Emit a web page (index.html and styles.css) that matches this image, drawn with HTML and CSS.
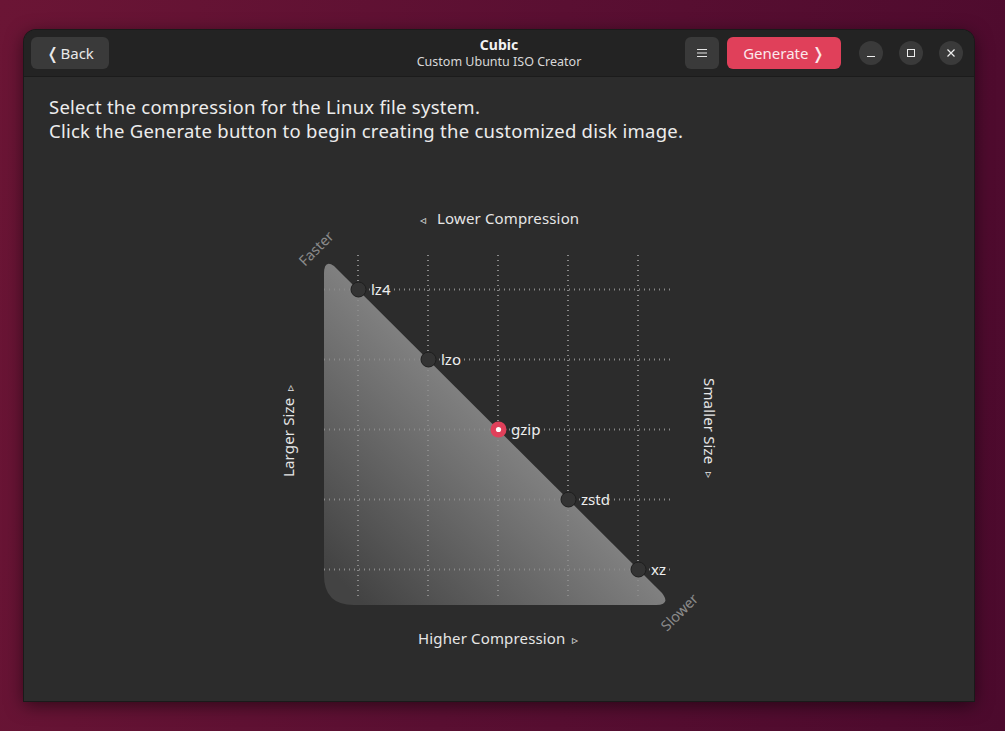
FILE: index.html
```html
<!DOCTYPE html>
<html>
<head>
<meta charset="utf-8">
<link rel="stylesheet" href="styles.css">
</head>
<body>
<div class="window">
  <header class="headerbar">
    <div class="hb-left">
      <button class="btn back"><span class="chev">❬</span>Back</button>
    </div>
    <div class="hb-title">
      <div class="title">Cubic</div>
      <div class="subtitle">Custom Ubuntu ISO Creator</div>
    </div>
    <div class="hb-right">
      <button class="btn menu">
        <svg width="12" height="10" viewBox="0 0 12 10"><path d="M1 1.5h10M1 5h10M1 8.5h10" stroke="#e6e6e6" stroke-width="1"/></svg>
      </button>
      <button class="btn generate">Generate<span class="chev">❭</span></button>
      <div class="wctl">
        <span class="wbtn"><svg width="10" height="10" viewBox="0 0 10 10"><path d="M1 8.5h8" stroke="#eee" stroke-width="1"/></svg></span>
        <span class="wbtn"><svg width="10" height="10" viewBox="0 0 10 10"><rect x="1.5" y="1.5" width="7" height="7" fill="none" stroke="#eee" stroke-width="1"/></svg></span>
        <span class="wbtn"><svg width="10" height="10" viewBox="0 0 10 10"><path d="M1.5 1.5l7 7M8.5 1.5l-7 7" stroke="#eee" stroke-width="1.2"/></svg></span>
      </div>
    </div>
  </header>
  <main class="content">
    <p class="intro">Select the compression for the Linux file system.<br>Click the Generate button to begin creating the customized disk image.</p>
    <svg class="chart" width="460" height="460" viewBox="269 200 460 460">
      <defs>
        <linearGradient id="g" x1="520" y1="380" x2="330" y2="570" gradientUnits="userSpaceOnUse">
          <stop offset="0" stop-color="#8e8e8e"/>
          <stop offset="1" stop-color="#434343"/>
        </linearGradient>
      </defs>
      <path d="M324 274 Q324 259 334 266 L662 593 Q671 605 656 605 L354 605 Q324 605 324 575 Z" fill="url(#g)"/>
      <g stroke="#8a8a8a" stroke-width="2" stroke-dasharray="1 4" fill="none">
        <path d="M358 255V600M428 255V600M498 255V600M568 255V600M638 255V600"/>
        <path d="M324 289.5H671M324 359.5H671M324 429.5H671M324 499.5H671M324 569.5H671"/>
      </g>
      <g class="pt">
        <circle cx="358.5" cy="289.5" r="7.5"/>
        <circle cx="428.5" cy="359.5" r="7.5"/>
        <circle cx="568.5" cy="499.5" r="7.5"/>
        <circle cx="638.5" cy="569.5" r="7.5"/>
      </g>
      <circle cx="498.5" cy="429.5" r="8" fill="#e0405a"/>
      <circle cx="498.5" cy="429.5" r="2.6" fill="#ffffff"/>
      <g class="lbl">
        <text x="371" y="295">lz4</text>
        <text x="441" y="365">lzo</text>
        <text x="511" y="435">gzip</text>
        <text x="581" y="505">zstd</text>
        <text x="651" y="575">xz</text>
      </g>
      <g class="axis">
        <text x="420" y="223.5"><tspan class="arr">◃</tspan><tspan x="437" y="224">Lower Compression</tspan></text>
        <text x="418" y="644">Higher Compression<tspan class="arr" x="572" y="643.5">▹</tspan></text>
        <text transform="translate(294 477) rotate(-90)">Larger Size<tspan class="arr" x="86" y="-0.5">▹</tspan></text>
        <text transform="translate(704 378) rotate(90)">Smaller Size<tspan class="arr" x="94" y="-0.5">▹</tspan></text>
      </g>
      <g class="speed">
        <text transform="translate(305 267) rotate(-45)">Faster</text>
        <text transform="translate(667 632) rotate(-45)">Slower</text>
      </g>
    </svg>
  </main>
</div>
</body>
</html>
```
FILE: styles.css
```css
html, body {
  margin: 0;
  padding: 0;
}
body {
  width: 1005px;
  height: 731px;
  overflow: hidden;
  background: linear-gradient(100deg, #6b1535 0%, #5a0f32 50%, #4c0a2d 100%);
  font-family: "Noto Sans", "DejaVu Sans", sans-serif;
  color: #ececec;
}
.window {
  margin: 30px 0 0 24px;
  width: 950px;
  height: 671px;
  background: #2c2c2c;
  border-radius: 12px 12px 0 0;
  box-shadow: 0 0 0 1px #1a1a1a, 0 4px 18px rgba(0,0,0,0.55);
  overflow: hidden;
  display: flex;
  flex-direction: column;
}
.headerbar {
  height: 46px;
  flex: none;
  background: #232323;
  border-bottom: 1px solid #1b1b1b;
  display: grid;
  grid-template-columns: 1fr auto 1fr;
  align-items: center;
  padding: 0 7px;
}
.hb-left { display: flex; }
.hb-right {
  display: flex;
  justify-content: flex-end;
  align-items: center;
}
.btn {
  height: 32px;
  border: none;
  border-radius: 6px;
  background: #3a3a3a;
  color: #e8e8e8;
  font-family: "Noto Sans", "DejaVu Sans", sans-serif;
  font-size: 15px;
  padding: 0;
  display: flex;
  align-items: center;
  justify-content: center;
}
.back {
  width: 78px;
}
.back .chev {
  font-family: "DejaVu Sans", sans-serif;
  font-size: 16px;
  margin-right: 1px;
}
.menu {
  width: 34px;
  margin-right: 8px;
}
.generate {
  width: 114px;
  background: #e0405a;
  color: #fbe8ec;
}
.generate .chev {
  font-family: "DejaVu Sans", sans-serif;
  font-size: 16px;
  margin-left: 3px;
}
.hb-title {
  text-align: center;
  line-height: 17px;
}
.title {
  font-weight: bold;
  font-size: 14px;
  color: #f2f2f2;
}
.subtitle {
  font-size: 12.5px;
  color: #d8d8d8;
}
.wctl {
  display: flex;
  gap: 16px;
  margin-left: 18px;
  margin-right: 4px;
}
.wbtn {
  width: 24px;
  height: 24px;
  border-radius: 50%;
  background: #3a3a3a;
  display: flex;
  align-items: center;
  justify-content: center;
}
.content {
  padding: 18px 25px 0;
  display: flex;
  flex-direction: column;
}
.intro {
  margin: 0;
  font-size: 18.5px;
  letter-spacing: 0.25px;
  line-height: 24px;
  color: #ececec;
}
.chart {
  display: block;
  margin: 57px auto 0;
}
.pt circle {
  fill: #333333;
  stroke: #1e1e1e;
  stroke-width: 1;
}
.lbl text {
  font-family: "Noto Sans", "DejaVu Sans", sans-serif;
  font-size: 15px;
  fill: #eeeeee;
}
.axis text {
  font-family: "Noto Sans", "DejaVu Sans", sans-serif;
  font-size: 15px;
  letter-spacing: 0.15px;
  fill: #e6e6e6;
}
.axis .arr {
  font-family: "DejaVu Sans", sans-serif;
  font-size: 12px;
}
.speed text {
  font-family: "Noto Sans", "DejaVu Sans", sans-serif;
  font-size: 14.5px;
  fill: #8a8a8a;
}
```
